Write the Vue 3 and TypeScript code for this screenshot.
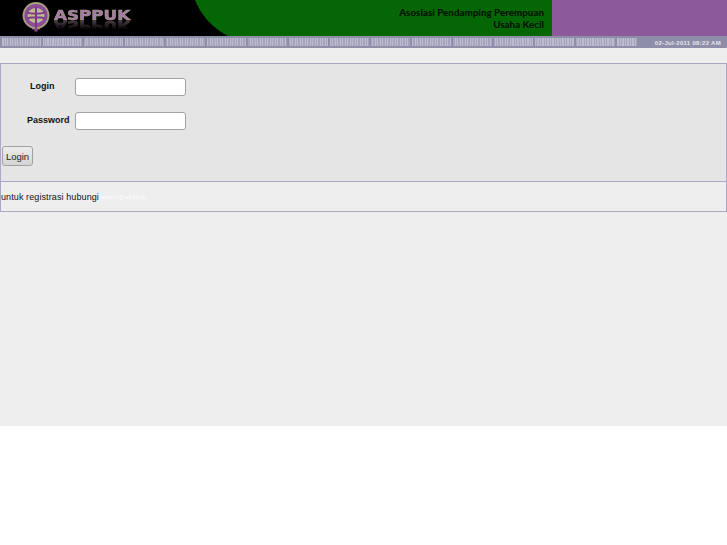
<script setup lang="ts">
const title: string[] = ['Asosiasi Pendamping Perempuan', 'Usaha Kecil']
</script>

<template>
  <div class="page">
    <header class="top">
      <div class="brand">
        <svg class="emblem" width="30" height="28" viewBox="0 0 30 28">
          <path d="M15 20 V27.5" stroke="#8d4c97" stroke-width="3" />
          <path d="M11 24.5 H19" stroke="#8d4c97" stroke-width="2" />
          <circle cx="15" cy="11.5" r="13.4" fill="#a9a27c" />
          <circle cx="15" cy="11.5" r="11.6" fill="#8d4c97" />
          <ellipse cx="15" cy="11.5" rx="8.4" ry="7.6" fill="#bdbb92" />
          <path d="M15 2.5 V25 M6 8.6 C10 10 20 10 24 8.6 M6 14.4 C10 13 20 13 24 14.4" stroke="#7d3a88" stroke-width="2" fill="none" />
        </svg>
        <span class="word">ASPPUK</span>
      </div>
      <svg class="curve" width="33" height="36" viewBox="0 0 33 36" preserveAspectRatio="none">
        <rect width="33" height="36" fill="#000" />
        <path d="M0 0 C6 15 17 28 33 36 V0 Z" fill="#056605" />
      </svg>
      <div class="title">
        <span v-for="line in title" :key="line">{{ line }}</span>
      </div>
      <div class="accent"></div>
    </header>

    <div class="strip">
      <div class="ticker"></div>
      <span class="date">02-Jul-2011 08:22 AM</span>
    </div>

    <main class="content">
      <form class="panel" @submit.prevent>
        <div class="field">
          <label class="label indent" for="login">Login</label>
          <input id="login" class="input" type="text" />
        </div>
        <div class="field">
          <label class="label" for="password">Password</label>
          <input id="password" class="input" type="password" />
        </div>
        <button class="btn" type="submit">Login</button>
      </form>
      <div class="note">
        <span>untuk registrasi hubungi</span>
        <span class="mail">admin@asppuk</span>
      </div>
    </main>
  </div>
</template>

<style scoped>
.page {
  width: 727px;
  height: 545px;
  background: #fff;
  font-family: "Liberation Sans", Arial, sans-serif;
}
.top {
  display: flex;
  height: 36px;
  background: #000;
}
.brand {
  width: 195px;
  display: flex;
  align-items: flex-start;
  padding: 4px 0 0 21px;
  box-sizing: border-box;
  gap: 3px;
  filter: blur(0.6px);
}
.emblem {
  overflow: visible;
  flex: none;
}
.word {
  margin-top: 5px;
  height: 12px;
  font-family: "DejaVu Sans", sans-serif;
  font-weight: 700;
  font-size: 13.5px;
  line-height: 12px;
  color: #a678ae;
  -webkit-text-stroke: 0.5px #aaa680;
  transform: scaleX(1.24);
  transform-origin: left center;
  -webkit-box-reflect: below -1px linear-gradient(transparent 20%, rgba(255, 255, 255, 0.5));
}
.curve {
  display: block;
  flex: none;
}
.title {
  width: 324px;
  background: #056605;
  display: flex;
  flex-direction: column;
  align-items: flex-end;
  padding: 6px 8px 0 0;
  box-sizing: border-box;
  font-family: Lato, sans-serif;
  font-size: 9.8px;
  font-weight: 900;
  line-height: 12px;
  color: #011201;
}
.accent {
  flex: 1;
  background: #8c5a9a;
}
.strip {
  height: 12px;
  background: #8e8ea8;
  display: flex;
  align-items: center;
  justify-content: space-between;
  padding-right: 6px;
}
.ticker {
  width: 637px;
  height: 8px;
  background:
    repeating-linear-gradient(90deg, #8e8eaa 0 2px, transparent 2px 41px),
    repeating-linear-gradient(90deg, #bcbccc 0 1px, #a4a4be 1px 2.5px);
  filter: blur(0.4px);
}
.date {
  padding-top: 1px;
  font-size: 6px;
  font-weight: 700;
  color: #e4e4ec;
  letter-spacing: 0.3px;
  white-space: nowrap;
}
.content {
  height: 378px;
  background: #eee;
  padding-top: 15px;
  box-sizing: border-box;
}
.panel {
  height: 119px;
  box-sizing: border-box;
  background: #e5e5e5;
  border: 1px solid #aaa8c4;
  padding: 14px 0 0 1px;
}
.field {
  display: flex;
  align-items: center;
  height: 18px;
  margin-bottom: 16px;
}
.label {
  width: 48px;
  margin-left: 25px;
  font-size: 9px;
  font-weight: 700;
  line-height: 14px;
  padding-bottom: 2px;
  color: #111;
}
.indent {
  width: 45px;
  margin-left: 28px;
}
.input {
  width: 111px;
  height: 18px;
  box-sizing: border-box;
  background: #fff;
  border: 1px solid #a2a2a2;
  border-radius: 3px;
  padding: 0;
}
.btn {
  display: block;
  width: 31px;
  height: 20px;
  padding: 0;
  font-family: inherit;
  font-size: 9.5px;
  color: #222;
  background: linear-gradient(#ececec, #d4d4d4);
  border: 1px solid #a2a2a2;
  border-radius: 3px;
}
.note {
  height: 30px;
  box-sizing: border-box;
  border: 1px solid #aaa8c4;
  border-top: 0;
  display: flex;
  align-items: center;
  gap: 2px;
  font-size: 9px;
  color: #111;
  letter-spacing: 0.1px;
}
.mail {
  font-size: 5px;
  color: #fff;
  letter-spacing: 0.9px;
}
</style>
